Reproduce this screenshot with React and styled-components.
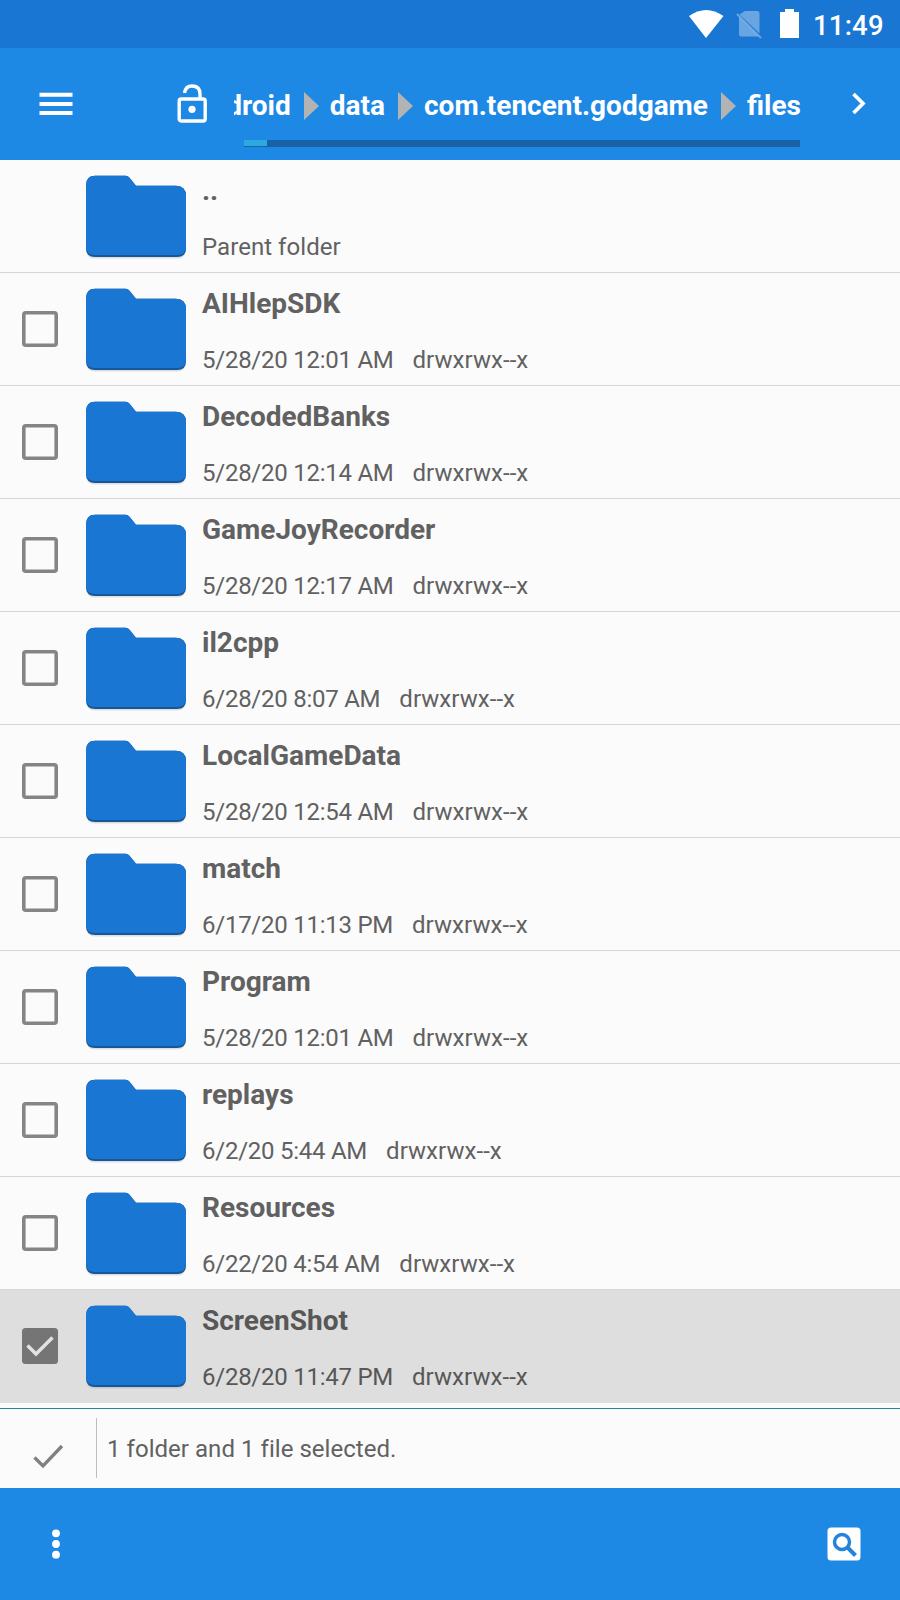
import React from "react";
import styled, { createGlobalStyle } from "styled-components";

const GlobalStyle = createGlobalStyle`
  * { box-sizing: border-box; }
  body {
    margin: 0;
    background: #fbfbfb;
    font-family: Roboto, "Liberation Sans", sans-serif;
  }
  svg { display: block; flex: none; }
`;

const Screen = styled.div`
  display: flex;
  flex-direction: column;
  width: 900px;
  height: 1600px;
  overflow: hidden;
  background: #fbfbfb;
`;

const SystemBar = styled.div`
  display: flex;
  align-items: center;
  justify-content: flex-end;
  flex: none;
  height: 48px;
  padding-right: 16px;
  background: #1976d2;
  color: #fff;
`;

const Clock = styled.span`
  width: 71px;
  margin-left: 13px;
  padding-top: 3px;
  font-size: 27.5px;
  line-height: 36px;
  font-weight: 500;
  letter-spacing: 0.2px;
  white-space: nowrap;
`;

const Toolbar = styled.header`
  display: flex;
  flex: none;
  height: 112px;
  background: #1e88e5;
`;

const ToolbarIcon = styled.div`
  flex: none;
  width: ${(p) => p.$width}px;
  padding: ${(p) => p.$pad};
`;

const PathArea = styled.div`
  display: flex;
  flex-direction: column;
  flex: none;
  width: 566px;
  padding-top: 40px;
`;

const Crumbs = styled.nav`
  display: flex;
  justify-content: flex-end;
  align-items: center;
  height: 36px;
  margin-right: -1px;
  overflow: hidden;
  color: #fff;
  font-size: 28px;
  line-height: 36px;
  font-weight: 700;
  white-space: nowrap;
`;

const Crumb = styled.span`
  flex: none;
`;

const Arrow = styled.svg`
  margin: 0 11px 0 13px;
`;

const UsageTrack = styled.div`
  height: 7px;
  margin: 16px 0 0 10px;
  background: #1862a5;
`;

const UsageFill = styled.div`
  width: 23px;
  height: 6px;
  background: #2ba9e0;
`;

const FileList = styled.main`
  flex: none;
  height: 1243px;
`;

const Row = styled.div`
  display: flex;
  height: 113px;
  border-bottom: 1px solid ${(p) => (p.$selected ? "#dedede" : "#d6d6d6")};
  background: ${(p) => (p.$selected ? "#dedede" : "#fbfbfb")};
  color: ${(p) => (p.$selected ? "#575757" : "#616161")};
`;

const CheckCell = styled.div`
  flex: none;
  width: 82px;
  padding: 36px 0 0 20px;
`;

const Details = styled.div`
  padding: 13px 0 0 10px;
  white-space: nowrap;
`;

const Name = styled.div`
  font-size: 28px;
  line-height: 36px;
  font-weight: 700;
`;

const Meta = styled.div`
  display: flex;
  gap: 19px;
  margin-top: 22px;
  font-size: 24px;
  line-height: 32px;
  letter-spacing: 0.05px;
`;

const Modified = styled.span`
  letter-spacing: -0.25px;
`;

const SelectionBar = styled.div`
  display: flex;
  flex: none;
  height: 80px;
  margin-top: 5px;
  border-top: 1px solid #1e8a9c;
  color: #616161;
`;

const SelectionIcon = styled.div`
  width: 97px;
  height: 60px;
  margin-top: 9px;
  padding: 24px 0 0 31px;
  border-right: 1px solid #bdbdbd;
`;

const SelectionText = styled.div`
  padding: 24px 0 0 10px;
  font-size: 24px;
  line-height: 32px;
  letter-spacing: 0.04px;
`;

const BottomBar = styled.footer`
  display: flex;
  justify-content: space-between;
  flex: none;
  height: 112px;
  padding: 39px 39px 0 51px;
  background: #1e88e5;
`;

const FolderIcon = () => (
  <svg width="110" height="112" viewBox="0 0 110 112">
    <path d="M12 19H44Q47 19 49 21L54 26H94Q104 26 104 36V89Q104 98.500 95 98.500H13Q4 98.500 4 89V27Q4 17 13 17Z" fill="#777" opacity=".22" />
    <path d="M13 15.700H43.500Q46 15.700 47.500 17.700L54 25.700H94Q104 26 104 36V88Q104 97 95 97H13Q4 97 4 88V25.500Q4 15.700 13 15.700Z" fill="#175799" />
    <path d="M13 15.700H43.500Q46 15.700 47.500 17.700L54 25.700H94Q104 26 104 36V86Q104 95 95 95H13Q4 95 4 86V25.500Q4 15.700 13 15.700Z" fill="#1976d2" />
  </svg>
);

const Checkbox = ({ checked }) => (
  <svg width="40" height="40" viewBox="0 0 40 40">
    {checked ? (
      <>
        <rect x="2" y="2" width="36" height="36" rx="3.500" fill="#757575" />
        <path d="M7.500 19.500L16 28L32.500 11.500" fill="none" stroke="#e2e2e2" strokeWidth="3.500" />
      </>
    ) : (
      <rect x="3.800" y="3.800" width="32.400" height="32.400" rx="2" fill="none" stroke="#858585" strokeWidth="3.600" />
    )}
  </svg>
);

const CrumbArrow = () => (
  <Arrow width="15" height="28" viewBox="0 0 15 28">
    <path d="M0 0L15 14L0 28Z" fill="#b3b3b3" />
  </Arrow>
);

const folders = [
  ["AIHlepSDK", "5/28/20 12:01 AM"],
  ["DecodedBanks", "5/28/20 12:14 AM"],
  ["GameJoyRecorder", "5/28/20 12:17 AM"],
  ["il2cpp", "6/28/20 8:07 AM"],
  ["LocalGameData", "5/28/20 12:54 AM"],
  ["match", "6/17/20 11:13 PM"],
  ["Program", "5/28/20 12:01 AM"],
  ["replays", "6/2/20 5:44 AM"],
  ["Resources", "6/22/20 4:54 AM"],
  ["ScreenShot", "6/28/20 11:47 PM", true],
];

export default function App() {
  return (
    <Screen>
      <GlobalStyle />
      <SystemBar>
        <svg width="112" height="48" viewBox="0 0 112 48">
          <path d="M1 16Q18 4 35.500 16L18 38Z" fill="#fff" />
          <path d="M57 11H69Q71.500 11 71.500 13.500V33.500L51.500 14.500ZM51 17L70.500 36.500H53Q51 36.500 51 34.500Z" fill="#fff" opacity=".35" />
          <path d="M49 14L73 38" stroke="#fff" strokeWidth="2" opacity=".35" />
          <path d="M97 9H106V12H111V38H92V12H97Z" fill="#fff" />
        </svg>
        <Clock>11:49</Clock>
      </SystemBar>
      <Toolbar>
        <ToolbarIcon $width={170} $pad="44px 0 0 39px">
          <svg width="34" height="24" viewBox="0 0 34 24">
            <path d="M.5 2.800H33.500M.5 12H33.500M.5 21H33.500" stroke="#fff" strokeWidth="4" />
          </svg>
        </ToolbarIcon>
        <ToolbarIcon $width={64} $pad="34px 0 0 6px">
          <svg width="32" height="42" viewBox="0 0 32 42">
            <rect x="3.200" y="17" width="26" height="22" rx="2" fill="none" stroke="#fff" strokeWidth="3.400" />
            <path d="M8.500 11Q9.500 4 16 4Q24 4 24 12V17" fill="none" stroke="#fff" strokeWidth="3.400" />
            <circle cx="16" cy="27.300" r="3.600" fill="#fff" />
          </svg>
        </ToolbarIcon>
        <PathArea>
          <Crumbs>
            <Crumb>Android</Crumb>
            <CrumbArrow />
            <Crumb>data</Crumb>
            <CrumbArrow />
            <Crumb>com.tencent.godgame</Crumb>
            <CrumbArrow />
            <Crumb>files</Crumb>
          </Crumbs>
          <UsageTrack>
            <UsageFill />
          </UsageTrack>
        </PathArea>
        <ToolbarIcon $width={100} $pad="43px 0 0 51px">
          <svg width="16" height="24" viewBox="0 0 16 24">
            <path d="M2.500 3L12 12.500L2.500 22" fill="none" stroke="#fff" strokeWidth="3.700" />
          </svg>
        </ToolbarIcon>
      </Toolbar>
      <FileList>
        <Row>
          <CheckCell />
          <FolderIcon />
          <Details>
            <Name>..</Name>
            <Meta>Parent folder</Meta>
          </Details>
        </Row>
        {folders.map(([name, date, selected]) => (
          <Row key={name} $selected={selected}>
            <CheckCell>
              <Checkbox checked={selected} />
            </CheckCell>
            <FolderIcon />
            <Details>
              <Name>{name}</Name>
              <Meta>
                <Modified>{date}</Modified>
                <span>drwxrwx--x</span>
              </Meta>
            </Details>
          </Row>
        ))}
      </FileList>
      <SelectionBar>
        <SelectionIcon>
          <svg width="34" height="28" viewBox="0 0 34 28">
            <path d="M3.500 15.500L12 24L31 4" fill="none" stroke="#808080" strokeWidth="3.300" />
          </svg>
        </SelectionIcon>
        <SelectionText>1 folder and 1 file selected.</SelectionText>
      </SelectionBar>
      <BottomBar>
        <svg width="10" height="34" viewBox="0 0 10 34">
          <circle cx="5" cy="6.300" r="3.900" fill="#fff" />
          <circle cx="5" cy="17" r="3.900" fill="#fff" />
          <circle cx="5" cy="27.700" r="3.900" fill="#fff" />
        </svg>
        <svg width="34" height="34" viewBox="0 0 34 34">
          <rect x=".5" y=".5" width="33" height="33" rx="3.500" fill="#fff" />
          <circle cx="15" cy="15" r="7.500" fill="none" stroke="#2583d8" strokeWidth="3.500" />
          <path d="M20 20L28.500 28.500" stroke="#2583d8" strokeWidth="4" />
        </svg>
      </BottomBar>
    </Screen>
  );
}
